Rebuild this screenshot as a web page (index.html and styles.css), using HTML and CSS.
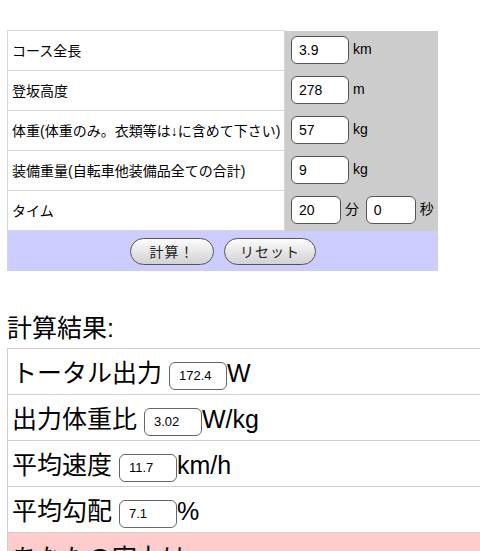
FILE: index.html
```html
<!DOCTYPE html>
<html lang="ja">
<head>
    <meta charset="UTF-8">
    <meta name="viewport" content="width=device-width, initial-scale=1.0">
    <title>パワー計算</title>
    <link rel="stylesheet" href="styles.css">
</head>
<body>
    <div class="page">
        <table class="form">
            <tr>
                <td class="label">コース全長</td>
                <td class="field"><input class="num" type="text" value="3.9"> km</td>
            </tr>
            <tr>
                <td class="label">登坂高度</td>
                <td class="field"><input class="num" type="text" value="278"> m</td>
            </tr>
            <tr>
                <td class="label">体重(体重のみ。衣類等は↓に含めて下さい)</td>
                <td class="field"><input class="num" type="text" value="57"> kg</td>
            </tr>
            <tr>
                <td class="label">装備重量(自転車他装備品全ての合計)</td>
                <td class="field"><input class="num" type="text" value="9"> kg</td>
            </tr>
            <tr>
                <td class="label">タイム</td>
                <td class="field"><input class="num short" type="text" value="20"> 分 <input class="num short sec" type="text" value="0"> 秒</td>
            </tr>
            <tr>
                <td class="actions" colspan="2">
                    <button class="pill calc">計算！</button>
                    <button class="pill reset">リセット</button>
                </td>
            </tr>
        </table>

        <h2 class="result-title">計算結果:</h2>

        <div class="result-wrap">
            <table class="result">
                <tr><td>トータル出力 <input class="out" type="text" value="172.4">W</td></tr>
                <tr><td>出力体重比 <input class="out" type="text" value="3.02">W/kg</td></tr>
                <tr><td>平均速度 <input class="out" type="text" value="11.7">km/h</td></tr>
                <tr><td>平均勾配 <input class="out" type="text" value="7.1">%</td></tr>
                <tr><td class="verdict">あなたの実力は</td></tr>
            </table>
        </div>
    </div>
</body>
</html>
```

FILE: styles.css
```css
html, body {
    margin: 0;
    overflow: hidden;
}

body {
    font-family: "Liberation Sans", "Noto Sans CJK JP", sans-serif;
    background-color: #fff;
    color: #000;
}

.page {
    padding: 30px 0 0 7px;
}

.form {
    border-collapse: collapse;
    width: 431px;
    font-size: 14px;
}

.form td {
    height: 37px;
    padding: 0 0 2px;
}

.label {
    width: 272px;
    padding-left: 4px !important;
    border: 1px solid #d6d6d6;
    background-color: #fff;
}

.field {
    background-color: #ccc;
    padding-left: 6px !important;
    white-space: nowrap;
}

.num {
    box-sizing: border-box;
    width: 58px;
    height: 28px;
    padding: 0 0 0 7px;
    border: 1px solid #555;
    border-radius: 6px;
    background: #fff;
    font: 14px "Liberation Sans", sans-serif;
    color: #000;
    vertical-align: middle;
}

.num.short {
    width: 50px;
}

.num.sec {
    margin-left: 3px;
}

.form td.actions {
    height: 40px;
    padding: 0;
    background-color: #ccf;
    text-align: center;
    border-left: 1px solid #d6d6d6;
}

.pill {
    box-sizing: border-box;
    height: 27px;
    padding: 0;
    margin: 0 3px;
    border: 1px solid #555;
    border-radius: 14px;
    background: linear-gradient(#fdfdfd, #e4e4e4 55%, #d2d2d2);
    font: 14px "Liberation Sans", "Noto Sans CJK JP", sans-serif;
    letter-spacing: 1px;
    color: #222;
}

.pill.calc {
    width: 84px;
}

.pill.reset {
    width: 92px;
}

.result-title {
    margin: 42px 0 5px;
    font-size: 25px;
    font-weight: normal;
    line-height: 30px;
}

.result-wrap {
    overflow: hidden;
}

.result {
    border-collapse: collapse;
    width: 560px;
    font-size: 25px;
}

.result td {
    height: 45px;
    padding: 0 0 0 4px;
    border: 1px solid #cfcfcf;
    white-space: nowrap;
}

.out {
    box-sizing: border-box;
    width: 58px;
    height: 28px;
    padding: 0 0 0 9px;
    border: 1px solid #666;
    border-radius: 6px;
    background: #fff;
    font: 13px "Liberation Sans", sans-serif;
    color: #000;
    vertical-align: 2px;
}

.result td.verdict {
    background-color: #fcc;
}
```
